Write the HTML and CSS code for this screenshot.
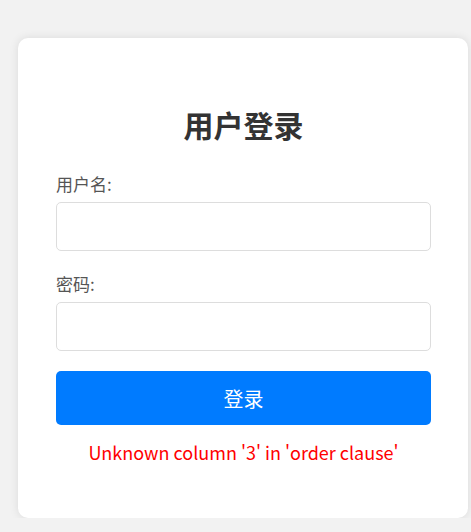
FILE: index.html
```html
<!DOCTYPE html>
<html lang="zh-CN">
<head>
    <meta charset="UTF-8">
    <meta name="viewport" content="width=device-width, initial-scale=1.0">
    <title>用户登录</title>
    <link rel="stylesheet" href="styles.css">
</head>
<body>
    <div class="login-box">
        <h2>用户登录</h2>
        <form class="login-form" onsubmit="return false;">
            <div class="form-group">
                <label for="username">用户名:</label>
                <input type="text" id="username" name="username">
            </div>
            <div class="form-group">
                <label for="password">密码:</label>
                <input type="password" id="password" name="password">
            </div>
            <button type="submit">登录</button>
        </form>
        <div class="error">Unknown column '3' in 'order clause'</div>
    </div>
</body>
</html>
```

FILE: styles.css
```css
body {
    margin: 0;
    padding: 38px 0 0 18px;
    background-color: #f2f2f2;
    font-family: "Noto Sans CJK SC", "Noto Sans", sans-serif;
    color: #333;
}

.login-box {
    width: 450px;
    box-sizing: border-box;
    background: white;
    border-radius: 10px;
    box-shadow: 0 0 10px rgba(0, 0, 0, 0.1);
    padding: 68px 37px 54px 38px;
}

.login-box h2 {
    margin: 0 0 30px;
    font-size: 30px;
    line-height: 36px;
    text-align: center;
    color: #333;
}

.form-group {
    margin-bottom: 21px;
}

.form-group label {
    display: block;
    font-size: 17px;
    line-height: 24px;
    color: #555;
    margin-bottom: 6px;
}

.form-group input {
    display: block;
    width: 100%;
    height: 49px;
    box-sizing: border-box;
    border: 1px solid #ddd;
    border-radius: 5px;
    padding: 0 10px;
    font-size: 16px;
    outline: none;
}

button {
    display: block;
    width: 100%;
    height: 54px;
    margin-top: -1px;
    border: none;
    border-radius: 5px;
    background-color: #007bff;
    color: white;
    font-family: inherit;
    font-size: 20px;
    cursor: pointer;
}

.error {
    margin-top: 15px;
    color: red;
    font-size: 18px;
    line-height: 24px;
    text-align: center;
}
```
